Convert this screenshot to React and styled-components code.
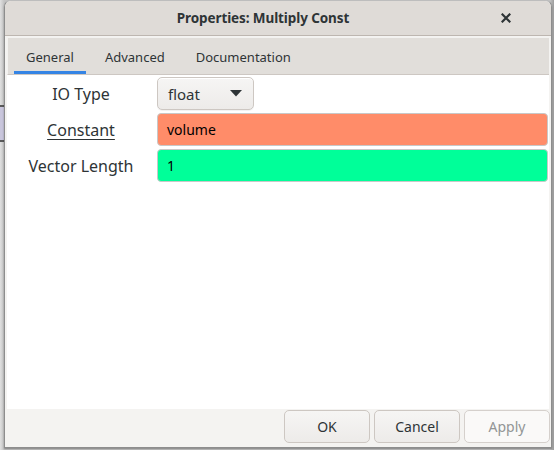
import React from "react";
import styled, { createGlobalStyle } from "styled-components";

const Global = createGlobalStyle`
  html, body { margin: 0; padding: 0; }
  body {
    background: #d4d4d4;
    font-family: "Noto Sans", "Open Sans", sans-serif;
    color: #2e3436;
    width: 554px;
    height: 450px;
    overflow: hidden;
  }
`;

const Desk = styled.div`
  position: relative;
  width: 554px;
  height: 450px;
  padding: 0 2px 2px 4px;
  box-sizing: border-box;
  background: linear-gradient(to right, #e0e0e0 0, #c4c4c4 4px, #c4c4c4 550px, #9c9c9c 554px);
`;

const BehindBlock = styled.div`
  position: absolute;
  left: 0;
  top: 105px;
  width: 4px;
  height: 33px;
  background: #c9c6dc;
  border-top: 2px solid #5a5a5a;
  border-bottom: 2px solid #5a5a5a;
`;

const Window = styled.div`
  position: relative;
  width: 548px;
  height: 448px;
  box-sizing: border-box;
  border: 1px solid #8d8d8d;
  border-top-color: #bdbdbd;
  border-radius: 7px 7px 0 0;
  background: #f4f3f1;
  display: flex;
  flex-direction: column;
  overflow: hidden;
  box-shadow: 0 1px 2px rgba(0,0,0,0.35);
`;

const TitleBar = styled.div`
  height: 34px;
  flex: none;
  background: #dfdbd7;
  border-bottom: 1px solid #bdb6b0;
  display: flex;
  align-items: center;
  justify-content: center;
  padding-right: 30px;
  position: relative;
`;

const Title = styled.div`
  font-weight: 700;
  font-size: 13.5px;
  color: #2e3436;
  letter-spacing: -0.1px;
`;

const CloseBtn = styled.div`
  position: absolute;
  right: 40px;
  top: 12px;
  width: 10px;
  height: 10px;
  display: flex;
`;

const Notebook = styled.div`
  flex: 1;
  display: flex;
  flex-direction: column;
  padding: 1px 2px 0 2px;
  min-height: 0;
`;

const TabHeader = styled.div`
  flex: none;
  background: #e1deda;
  border-top: 1px solid #f3f2f0;
  border-left: 1px solid #f3f2f0;
  border-bottom: 1px solid #cdc7c2;
  box-sizing: border-box;
  height: 38px;
  display: flex;
  align-items: stretch;
  padding-left: 6px;
  gap: 7px;
`;

const Tab = styled.div`
  padding: 1px 12px 0;
  display: flex;
  align-items: center;
  font-size: 13px;
  color: #2e3436;
  box-shadow: ${p => (p.$active ? "inset 0 -3px 0 #3584e4" : "none")};
`;

const Page = styled.div`
  flex: 1;
  background: #ffffff;
  padding: 2px 0 0 0;
  display: grid;
  grid-template-columns: 148px 1fr;
  column-gap: 2px;
  row-gap: 3px;
  align-content: start;
`;

const Label = styled.div`
  font-size: 16px;
  color: #2e3436;
  display: flex;
  align-items: center;
  justify-content: center;
  text-decoration: ${p => (p.$underline ? "underline" : "none")};
  text-underline-offset: 3px;
  text-decoration-thickness: 1px;
`;

const Select = styled.div`
  justify-self: start;
  width: 97px;
  height: 33px;
  box-sizing: border-box;
  border: 1px solid #cdc7c2;
  border-radius: 5px;
  background: linear-gradient(#f6f5f4, #edebe9);
  box-shadow: inset 0 1px #ffffff, 0 1px rgba(0,0,0,0.05);
  display: flex;
  align-items: center;
  justify-content: space-between;
  padding: 0 11px 0 10px;
  font-size: 15px;
  color: #2e3436;
`;

const Field = styled.div`
  height: 33px;
  box-sizing: border-box;
  margin-right: 1px;
  border: 1px solid #c8c8c8;
  border-radius: 4px;
  background: ${p => p.$bg};
  display: flex;
  align-items: center;
  padding-left: 9px;
  font-size: 14px;
  color: #000000;
`;

const ButtonBar = styled.div`
  height: 37px;
  flex: none;
  background: #f4f3f1;
  display: flex;
  justify-content: flex-end;
  align-items: flex-start;
  padding: 1px 1px 0 0;
  gap: 4px;
`;

const Button = styled.div`
  width: 86px;
  height: 33px;
  box-sizing: border-box;
  border: 1px solid ${p => (p.$disabled ? "#d5d0cc" : "#cdc7c2")};
  border-radius: 5px;
  background: ${p => (p.$disabled ? "#faf9f8" : "linear-gradient(#f6f5f4, #edebe9)")};
  display: flex;
  align-items: center;
  justify-content: center;
  font-size: 14px;
  color: ${p => (p.$disabled ? "#929595" : "#2e3436")};
`;

export default function App() {
  return (
    <>
      <Global />
      <Desk>
        <BehindBlock />
        <Window>
          <TitleBar>
            <Title>Properties: Multiply Const</Title>
            <CloseBtn>
              <svg width="10" height="10" viewBox="0 0 10 10">
                <path d="M1.5 1.5 L8.5 8.5 M8.5 1.5 L1.5 8.5" stroke="#2e3436" strokeWidth="2.2" strokeLinecap="square" />
              </svg>
            </CloseBtn>
          </TitleBar>
          <Notebook>
            <TabHeader>
              <Tab $active>General</Tab>
              <Tab>Advanced</Tab>
              <Tab>Documentation</Tab>
            </TabHeader>
            <Page>
              <Label>IO Type</Label>
              <div>
                <Select>
                  <span>float</span>
                  <svg width="12" height="7" viewBox="0 0 12 7">
                    <path d="M0 0 L12 0 L6 6.5 Z" fill="#2e3436" />
                  </svg>
                </Select>
              </div>
              <Label $underline>Constant</Label>
              <Field $bg="#ff8c69">volume</Field>
              <Label>Vector Length</Label>
              <Field $bg="#00ff99">1</Field>
            </Page>
          </Notebook>
          <ButtonBar>
            <Button>OK</Button>
            <Button>Cancel</Button>
            <Button $disabled>Apply</Button>
          </ButtonBar>
        </Window>
      </Desk>
    </>
  );
}
